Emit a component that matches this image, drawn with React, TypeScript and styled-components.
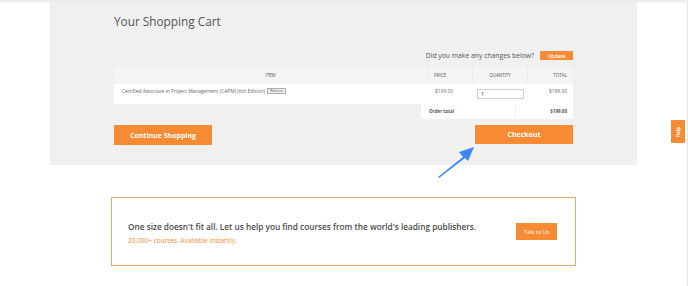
import { FC } from "react";
import styled, { createGlobalStyle } from "styled-components";

const GlobalStyle = createGlobalStyle`
  html, body {
    margin: 0;
    padding: 0;
    background: #ffffff;
    font-family: "Open Sans", "Liberation Sans", sans-serif;
    color: #555555;
  }
`;

const orange = "#f68b33";

const TopStrip = styled.div`
  height: 2px;
  background: #ececec;
  box-shadow: 0 1px 1px rgba(0, 0, 0, 0.04);
`;

const Page = styled.div`
  position: relative;
  width: 688px;
  height: 284px;
  border-right: 1px solid #e4e4e4;
  box-sizing: border-box;
`;

const CartPanel = styled.section`
  margin-left: 50px;
  width: 587px;
  height: 163px;
  box-sizing: border-box;
  padding: 11px 64px 0 64px;
  background: #f0f0f0;
`;

const Title = styled.h1`
  margin: 0;
  font-size: 11.8px;
  font-weight: 400;
  color: #555555;
  line-height: 17px;
`;

const ChangesRow = styled.div`
  display: flex;
  justify-content: flex-end;
  align-items: center;
  gap: 6px;
  margin-top: 21px;
  height: 9px;
  font-size: 6.8px;
  color: #555555;
`;

const SmallButton = styled.button`
  border: none;
  background: ${orange};
  color: #ffffff;
  font-family: inherit;
  font-weight: 600;
  font-size: 5px;
  width: 33px;
  height: 9px;
  padding: 0;
  cursor: pointer;
`;

const Table = styled.div`
  margin-top: 7px;
  display: grid;
  grid-template-columns: 313px 45px 55px 46px;
`;

const HeadCell = styled.div<{ $align?: string; $first?: boolean }>`
  height: 17px;
  display: flex;
  align-items: center;
  justify-content: ${(p) => p.$align || "flex-start"};
  padding: 0 6px 1px;
  box-sizing: border-box;
  background: #f4f4f4;
  border-left: ${(p) => (p.$first ? "none" : "1px solid #ebebeb")};
  font-size: 4.5px;
  text-transform: uppercase;
  color: #555555;
`;

const BodyCell = styled.div<{ $align?: string }>`
  height: 20px;
  display: flex;
  align-items: flex-start;
  justify-content: ${(p) => p.$align || "flex-start"};
  padding: 4px 6px 0 8px;
  box-sizing: border-box;
  background: #ffffff;
  font-size: 4.9px;
  color: #666666;
  line-height: 6px;
`;

const RemoveTag = styled.span`
  display: inline-block;
  margin-left: 2px;
  padding: 0 2px;
  border: 1px solid #aaaaaa;
  background: #f2f2f2;
  font-size: 3.5px;
  line-height: 4px;
  color: #555555;
`;

const QtyInput = styled.input`
  width: 47px;
  height: 10px;
  box-sizing: border-box;
  margin-top: 1px;
  border: 1px solid #cccccc;
  padding: 0 3px;
  font-family: inherit;
  font-size: 5.5px;
  color: #333333;
  outline: none;
`;

const TotalRow = styled.div`
  margin-left: 307px;
  display: grid;
  grid-template-columns: 94px 58px;
  height: 15px;
  background: #ffffff;
`;

const TotalCell = styled.div<{ $right?: boolean }>`
  display: flex;
  align-items: center;
  justify-content: ${(p) => (p.$right ? "flex-end" : "flex-start")};
  padding: 0 6px 2px 8px;
  border-left: ${(p) => (p.$right ? "1px solid #f0f0f0" : "none")};
  font-size: 4.5px;
  font-weight: 700;
  color: #555555;
`;

const ActionRow = styled.div`
  display: flex;
  justify-content: space-between;
  margin-top: 6px;
`;

const BigButton = styled.button<{ $h?: number }>`
  width: 98px;
  height: ${(p) => p.$h || 20}px;
  border: none;
  background: ${orange};
  color: #ffffff;
  font-family: inherit;
  font-weight: 700;
  font-size: 7px;
  padding: 0;
  cursor: pointer;
`;

const Arrow = styled.svg`
  position: absolute;
  left: 436px;
  top: 142px;
`;

const PromoBox = styled.section`
  margin: 32px 0 0 111px;
  width: 465px;
  height: 69px;
  box-sizing: border-box;
  border: 1px solid #f3a665;
  display: flex;
  align-items: center;
  justify-content: space-between;
  padding: 3px 18px 0 16px;
`;

const PromoText = styled.div`
  display: flex;
  flex-direction: column;
  gap: 4px;
`;

const PromoHeading = styled.p`
  margin: 0;
  font-size: 8.25px;
  font-weight: 600;
  color: #4a4a4a;
`;

const PromoSub = styled.p`
  margin: 0;
  font-size: 6.5px;
  color: ${orange};
`;

const TalkButton = styled.button`
  width: 41px;
  height: 17px;
  border: none;
  background: ${orange};
  color: #ffffff;
  font-family: inherit;
  font-size: 5.5px;
  padding: 0;
  margin-bottom: 3px;
  cursor: pointer;
`;

const HelpTab = styled.div`
  position: absolute;
  right: 2px;
  top: 118px;
  width: 14px;
  height: 23px;
  background: ${orange};
  border-radius: 1px;
  display: flex;
  align-items: center;
  justify-content: center;
  span {
    transform: rotate(-90deg);
    color: #ffffff;
    font-size: 4.5px;
    font-weight: 700;
  }
`;

const App: FC = () => {
  return (
    <>
      <GlobalStyle />
      <TopStrip />
      <Page>
        <CartPanel>
          <Title>Your Shopping Cart</Title>
          <ChangesRow>
            <span>Did you make any changes below?</span>
            <SmallButton>Update</SmallButton>
          </ChangesRow>
          <Table>
            <HeadCell $align="center" $first>
              ITEM
            </HeadCell>
            <HeadCell>Price</HeadCell>
            <HeadCell $align="center">Quantity</HeadCell>
            <HeadCell $align="flex-end">Total</HeadCell>
            <BodyCell>
              Certified Associate in Project Management (CAPM) (6th Edition)
              <RemoveTag>Remove</RemoveTag>
            </BodyCell>
            <BodyCell>$199.00</BodyCell>
            <BodyCell $align="center">
              <QtyInput defaultValue="1" />
            </BodyCell>
            <BodyCell $align="flex-end">$199.00</BodyCell>
          </Table>
          <TotalRow>
            <TotalCell>Order total</TotalCell>
            <TotalCell $right>$199.00</TotalCell>
          </TotalRow>
          <ActionRow>
            <BigButton>Continue Shopping</BigButton>
            <BigButton $h={19}>Checkout</BigButton>
          </ActionRow>
        </CartPanel>
        <Arrow width="42" height="36" viewBox="0 0 42 36">
          <path d="M2 33 L27 13 L23 8 L38 3 L32 17 L29 14 L3 34 Z" fill="#3d87f5" />
        </Arrow>
        <PromoBox>
          <PromoText>
            <PromoHeading>
              One size doesn't fit all. Let us help you find courses from the world's leading publishers.
            </PromoHeading>
            <PromoSub>20,000+ courses. Available instantly.</PromoSub>
          </PromoText>
          <TalkButton>Talk to Us</TalkButton>
        </PromoBox>
        <HelpTab>
          <span>Help</span>
        </HelpTab>
      </Page>
    </>
  );
};

export default App;
